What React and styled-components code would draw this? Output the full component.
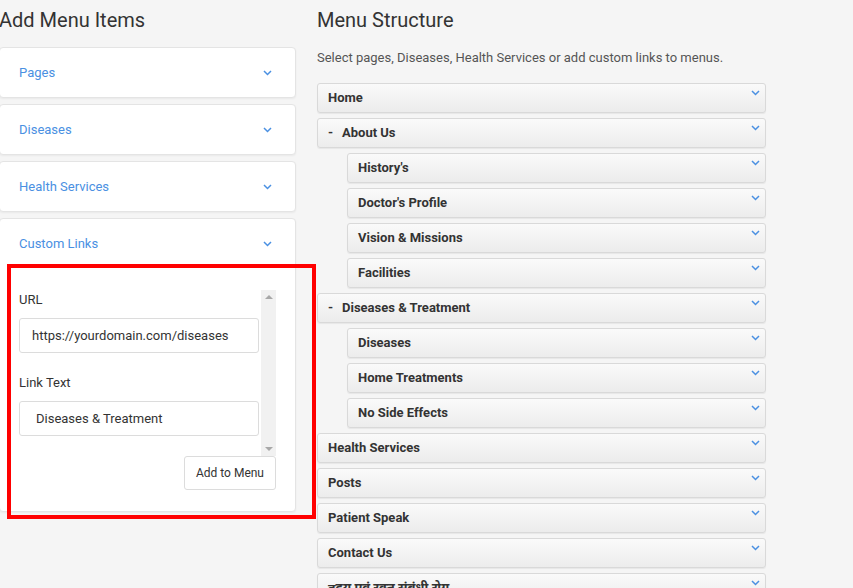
import React from "react";
import styled, { createGlobalStyle } from "styled-components";

const GlobalStyle = createGlobalStyle`
  html, body {
    margin: 0;
    padding: 0;
    background: #f5f5f5;
    font-family: Roboto, "Noto Sans", "Liberation Sans", sans-serif;
    color: #333;
    overflow: hidden;
  }
`;

const Page = styled.div`
  position: relative;
  display: flex;
  align-items: flex-start;
  gap: 21px;
  width: 853px;
  height: 588px;
  overflow: hidden;
`;

const LeftColumn = styled.div`
  width: 297px;
  margin-left: -1px;
  flex-shrink: 0;
`;

const RightColumn = styled.div`
  width: 449px;
  flex-shrink: 0;
`;

const Heading = styled.h2`
  margin: 8px 0 0;
  font-size: 20px;
  font-weight: 400;
  line-height: 24px;
  color: #333;
`;

const CardList = styled.div`
  display: flex;
  flex-direction: column;
  gap: 6px;
  margin-top: 15px;
`;

const Card = styled.div`
  background: #fff;
  border: 1px solid #e4e4e4;
  border-radius: 4px;
  box-shadow: 0 1px 2px rgba(0, 0, 0, 0.05);
`;

const CardHeader = styled.div`
  display: flex;
  align-items: center;
  justify-content: space-between;
  height: 49px;
  padding: 0 23px 0 19px;
  font-size: 13px;
  color: #4a90e2;
`;

const CardBody = styled.div`
  padding: 22px 19px 21px 19px;
  display: flex;
  flex-direction: column;
`;

const ScrollArea = styled.div`
  display: flex;
  height: 166px;
`;

const Fields = styled.div`
  flex: 1;
  padding-right: 2px;
  overflow: hidden;
`;

const Track = styled.div`
  width: 15px;
  flex-shrink: 0;
  background: #f1f1f1;
  display: flex;
  flex-direction: column;
  justify-content: space-between;
  align-items: center;
  padding: 5px 0;
  box-sizing: border-box;
`;

const Arrow = styled.span`
  width: 0;
  height: 0;
  border-left: 4px solid transparent;
  border-right: 4px solid transparent;
  ${(p) =>
    p.$down
      ? "border-top: 4px solid #a8a8a8;"
      : "border-bottom: 4px solid #a8a8a8;"}
`;

const Label = styled.div`
  font-size: 13px;
  color: #333;
  margin: 2px 0 11px;
`;

const TextInput = styled.div`
  box-sizing: border-box;
  height: 35px;
  display: flex;
  align-items: center;
  padding-left: ${(p) => p.$pad || 12}px;
  margin-bottom: 22px;
  border: 1px solid #dcdcdc;
  border-radius: 3px;
  background: #fff;
  font-size: 13px;
  color: #333;
  white-space: nowrap;
`;

const ButtonRow = styled.div`
  display: flex;
  justify-content: flex-end;
`;

const Button = styled.button`
  height: 34px;
  padding: 0 11px;
  background: #fff;
  border: 1px solid #dcdcdc;
  border-radius: 3px;
  font-family: Roboto, "Liberation Sans", sans-serif;
  font-size: 12px;
  color: #333;
`;

const Description = styled.p`
  margin: 18px 0 0;
  font-size: 13px;
  color: #555;
  line-height: 16px;
`;

const MenuList = styled.div`
  display: flex;
  flex-direction: column;
  gap: 5px;
  margin-top: 17px;
`;

const MenuRow = styled.div`
  box-sizing: border-box;
  height: 30px;
  margin-left: ${(p) => (p.$nested ? 30 : 0)}px;
  display: flex;
  align-items: flex-start;
  justify-content: space-between;
  padding: 0 5px 0 10px;
  background: linear-gradient(#fafafa, #ececec);
  border: 1px solid #d9d9d9;
  border-radius: 3px;
  box-shadow: 0 1px 1px rgba(0, 0, 0, 0.06);
`;

const MenuLabel = styled.span`
  font-size: 13px;
  font-weight: 700;
  color: #333;
  line-height: 28px;
  font-family: Roboto, "Noto Sans", "Noto Sans Devanagari", "Liberation Sans", sans-serif;
`;

const Dash = styled.span`
  display: inline-block;
  width: 14px;
`;

const RowChevron = styled.span`
  display: flex;
  padding-top: 6px;
`;

const Highlight = styled.div`
  position: absolute;
  left: 7px;
  top: 264px;
  width: 301px;
  height: 247px;
  border: 4px solid #ff0000;
  pointer-events: none;
`;

const Chevron = () => (
  <svg width="9" height="6" viewBox="0 0 9 6">
    <path d="M1 1l3.5 3.5L8 1" fill="none" stroke="#4a90e2" strokeWidth="1.5" />
  </svg>
);

const panels = ["Pages", "Diseases", "Health Services"];

const menu = [
  { label: "Home" },
  { label: "About Us", dash: true },
  { label: "History's", nested: true },
  { label: "Doctor's Profile", nested: true },
  { label: "Vision & Missions", nested: true },
  { label: "Facilities", nested: true },
  { label: "Diseases & Treatment", dash: true },
  { label: "Diseases", nested: true },
  { label: "Home Treatments", nested: true },
  { label: "No Side Effects", nested: true },
  { label: "Health Services" },
  { label: "Posts" },
  { label: "Patient Speak" },
  { label: "Contact Us" },
  { label: "हृदय एवं रक्त संबंधी रोग" },
];

export default function App() {
  return (
    <>
      <GlobalStyle />
      <Page>
        <LeftColumn>
          <Heading>Add Menu Items</Heading>
          <CardList>
            {panels.map((p) => (
              <Card key={p}>
                <CardHeader>
                  {p}
                  <Chevron />
                </CardHeader>
              </Card>
            ))}
            <Card>
              <CardHeader>
                Custom Links
                <Chevron />
              </CardHeader>
              <CardBody>
                <ScrollArea>
                  <Fields>
                    <Label>URL</Label>
                    <TextInput>https://yourdomain.com/diseases</TextInput>
                    <Label>Link Text</Label>
                    <TextInput $pad={16}>Diseases &amp; Treatment</TextInput>
                  </Fields>
                  <Track>
                    <Arrow />
                    <Arrow $down />
                  </Track>
                </ScrollArea>
                <ButtonRow>
                  <Button>Add to Menu</Button>
                </ButtonRow>
              </CardBody>
            </Card>
          </CardList>
        </LeftColumn>
        <RightColumn>
          <Heading>Menu Structure</Heading>
          <Description>
            Select pages, Diseases, Health Services or add custom links to menus.
          </Description>
          <MenuList>
            {menu.map((m, i) => (
              <MenuRow key={i} $nested={m.nested}>
                <MenuLabel>
                  {m.dash && <Dash>-</Dash>}
                  {m.label}
                </MenuLabel>
                <RowChevron>
                  <Chevron />
                </RowChevron>
              </MenuRow>
            ))}
          </MenuList>
        </RightColumn>
        <Highlight />
      </Page>
    </>
  );
}
